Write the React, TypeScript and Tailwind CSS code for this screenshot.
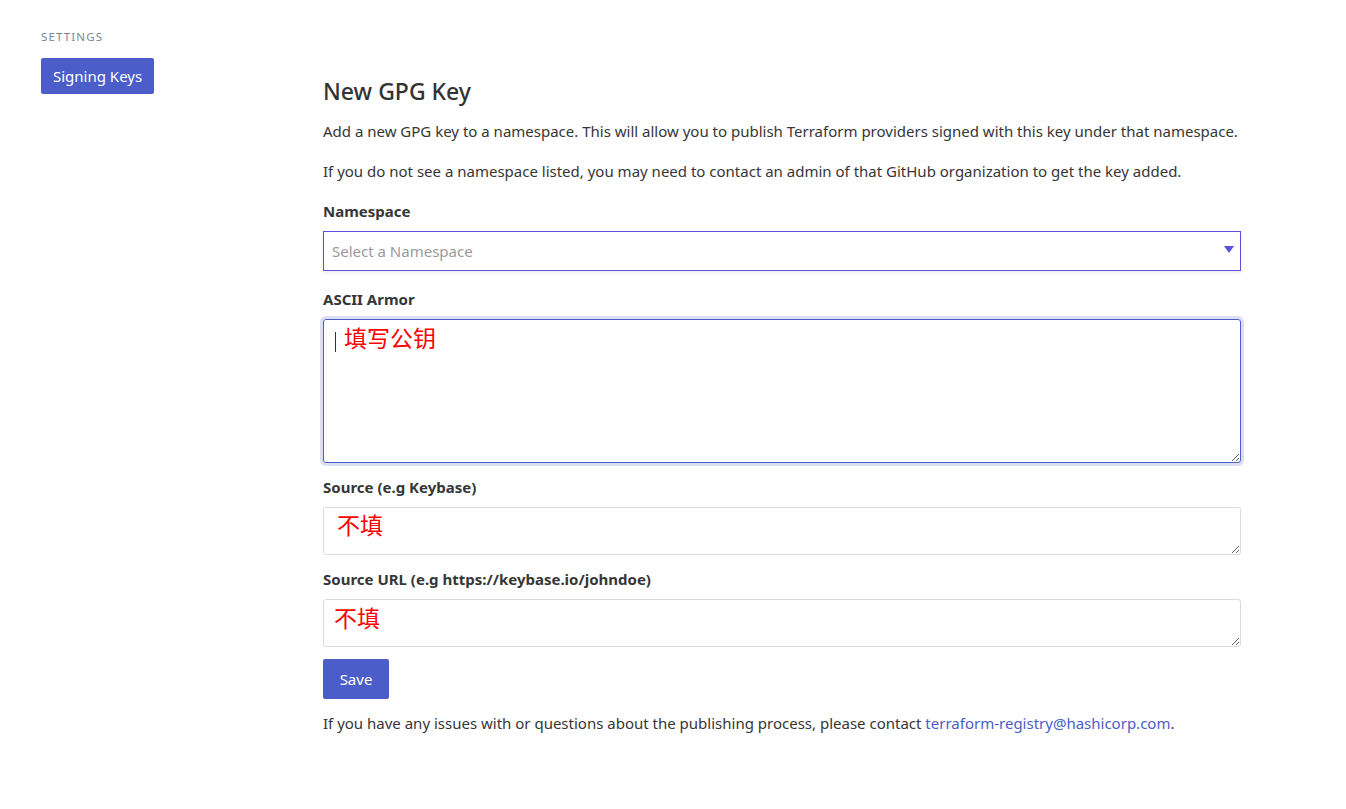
export default function App() {
  return (
    <main
      className="min-h-screen bg-white text-[#363636] flex pt-[29px] pl-[41px]"
      style={{ fontFamily: '"Noto Sans", "Open Sans", sans-serif' }}
    >
      {/* SIDEBAR */}
      <aside className="w-[282px] shrink-0">
        <p className="text-[11.5px] leading-4 tracking-[0.1em] uppercase text-[#7a8699]">
          Settings
        </p>
        <button className="mt-[13px] h-9 px-3 rounded-[2px] bg-[#4a5dc9] text-white text-[15px]">
          Signing Keys
        </button>
      </aside>

      {/* FORM */}
      <section className="w-[918px] pt-[47px] text-[15px]">
        <h1 className="text-[23px] leading-[30px] font-medium text-[#333]">New GPG Key</h1>

        <p className="mt-[13px] leading-6">
          Add a new GPG key to a namespace. This will allow you to publish Terraform providers
          signed with this key under that namespace.
        </p>
        <p className="mt-4 leading-6">
          If you do not see a namespace listed, you may need to contact an admin of that GitHub
          organization to get the key added.
        </p>

        <label className="block mt-4 leading-6 font-bold">Namespace</label>
        <div className="relative mt-2 h-10 border border-[#5b50e0] shadow-[0_2px_4px_rgba(0,0,0,0.08)] flex items-center px-2">
          <span className="text-[#9a9a9a]">Select a Namespace</span>
          <span className="absolute right-[6px] top-[14px] w-0 h-0 border-l-[5px] border-r-[5px] border-t-[7px] border-l-transparent border-r-transparent border-t-[#5b50e0]" />
        </div>

        <label className="block mt-4 leading-6 font-bold">ASCII Armor</label>
        <div className="relative mt-2">
          <textarea
            className="block w-full h-[144px] rounded-[3px] border border-[#4a5dc9] ring-[3px] ring-[#4a5dc9]/20 outline-none px-2 py-1"
            defaultValue=""
          />
          <span className="absolute left-[12px] top-[13px] w-px h-5 bg-[#333]" />
          <span
            className="absolute left-[21px] top-[2px] text-[23px] leading-8 text-[#ff0000]"
            style={{ fontFamily: '"Noto Sans CJK SC", sans-serif' }}
          >
            填写公钥
          </span>
        </div>

        <label className="block mt-3 leading-6 font-bold">Source (e.g Keybase)</label>
        <div className="relative mt-2">
          <textarea className="block w-full h-12 rounded-[3px] border border-[#dbdbdb] outline-none px-2 py-1" />
          <span
            className="absolute left-[14px] top-[1px] text-[23px] leading-8 text-[#ff0000]"
            style={{ fontFamily: '"Noto Sans CJK SC", sans-serif' }}
          >
            不填
          </span>
        </div>

        <label className="block mt-3 leading-6 font-bold">Source URL (e.g https://keybase.io/johndoe)</label>
        <div className="relative mt-2">
          <textarea className="block w-full h-12 rounded-[3px] border border-[#dbdbdb] outline-none px-2 py-1" />
          <span
            className="absolute left-[11px] top-[2px] text-[23px] leading-8 text-[#ff0000]"
            style={{ fontFamily: '"Noto Sans CJK SC", sans-serif' }}
          >
            不填
          </span>
        </div>

        <button className="mt-3 h-10 w-[66px] rounded-[2px] bg-[#4a5dc9] text-white">Save</button>

        <p className="mt-3 leading-6">
          If you have any issues with or questions about the publishing process, please contact{" "}
          <a href="#" className="text-[#4a5dc9]">
            terraform-registry@hashicorp.com
          </a>
          .
        </p>
      </section>
    </main>
  );
}
